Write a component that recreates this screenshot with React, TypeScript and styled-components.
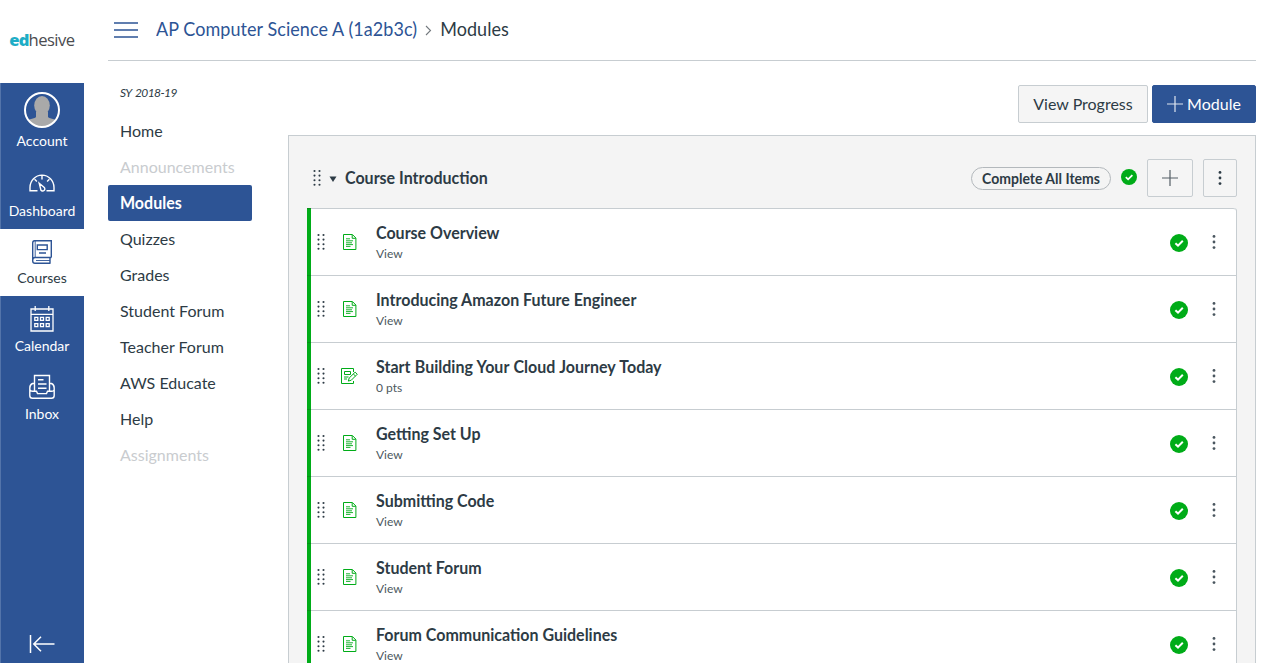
import React from "react";
import styled, { createGlobalStyle } from "styled-components";

const BLUE = "#2d5495";
const INK = "#2d3b45";
const LINE = "#c7cdd1";
const GREEN = "#00ac18";

const Global = createGlobalStyle`
  * { box-sizing: border-box; }
  body { margin: 0; background: #fff; color: ${INK}; font: 16px/24px Lato, "Liberation Sans", sans-serif; overflow: hidden; }
  svg { display: block; flex: none; }
  button { font: inherit; color: inherit; padding: 0; }
  a { color: inherit; text-decoration: none; }
`;

const Page = styled.div`display: flex; height: 663px; overflow: hidden;`;

const Rail = styled.nav`
  width: 84px; flex: none; display: flex; flex-direction: column;
  background: ${BLUE}; box-shadow: inset 1px 0 #5374aa;
`;
const Logo = styled.div`
  height: 83px; background: #fff; color: #4b4c50; display: flex; justify-content: center;
  font: 400 16.6px/80px "Open Sans", sans-serif; letter-spacing: -0.5px;
  b { color: #1fadc6; font-weight: 800; letter-spacing: -0.9px; }
`;
const RailItem = styled.a<{ $h: number; $top: number; $gap: number; $active?: boolean }>`
  height: ${p => p.$h}px; padding-top: ${p => p.$top}px; gap: ${p => p.$gap}px;
  display: flex; flex-direction: column; align-items: center;
  font-size: 14px; line-height: 18px;
  color: ${p => (p.$active ? INK : "#fff")};
  background: ${p => (p.$active ? "#fff" : "transparent")};
  svg { color: ${p => (p.$active ? BLUE : "#fff")}; }
`;
const Collapse = styled.div`
  margin-top: auto; height: 39px; padding: 10px 0 0 29px; color: #fff;
`;

const Shell = styled.div`flex: 1; min-width: 0; padding: 0 23px 0 24px;`;
const Header = styled.header`
  height: 61px; border-bottom: 1px solid ${LINE}; display: flex; align-items: center; padding: 0 0 2px 6px;
  font-size: 18px; letter-spacing: 0.06px;
`;
const Course = styled.a`color: ${BLUE}; margin-left: 18px; transform: scaleY(1.06);`;
const Crumb = styled.span`transform: scaleY(1.06);`;
const Columns = styled.div`display: flex;`;
const Side = styled.nav`width: 180px; flex: none; padding-top: 23px;`;
const Term = styled.div`
  padding-left: 12px; height: 29px; font-size: 12px; line-height: 18px; font-style: italic;
  letter-spacing: -0.6px; word-spacing: 1.5px;
`;
const SideLink = styled.a<{ $active?: boolean; $muted?: boolean }>`
  display: block; width: 144px; height: 36px; padding-left: 12px; line-height: 35px; border-radius: 2px;
  color: ${p => (p.$active ? "#fff" : p.$muted ? "#c9cccf" : INK)};
  background: ${p => (p.$active ? BLUE : "transparent")};
  font-weight: ${p => (p.$active ? 700 : 400)};
`;
const Tall = styled.span`display: inline-block; transform: translateY(-0.6px) scaleY(1.09);`;
const Content = styled.main`flex: 1; padding-top: 24px;`;
const Actions = styled.div`display: flex; justify-content: flex-end; gap: 4px; margin-bottom: 12px;`;
const Button = styled.button<{ $w: number; $primary?: boolean }>`
  width: ${p => p.$w}px; height: 38px; border-radius: 2px; display: flex; align-items: center; justify-content: center;
  gap: 4px;
  border: 1px solid ${p => (p.$primary ? BLUE : LINE)};
  background: ${p => (p.$primary ? BLUE : "#f5f5f5")};
  color: ${p => (p.$primary ? "#fff" : INK)};
`;
const Panel = styled.section`border: 1px solid ${LINE}; background: #f4f4f4; padding: 0 18px; height: 620px;`;
const ModuleHead = styled.div`height: 72px; display: flex; align-items: center; padding: 12px 0 0 6px;`;
const ModuleName = styled.h2`flex: 1; margin: 0 0 0 7px; font-size: 16px; line-height: 24px; font-weight: 700;`;
const Pill = styled.span`
  width: 140px; height: 23px; margin: 1px 10px 0 0; border: 1px solid #b3b8bc; border-radius: 12px;
  font-size: 14px; line-height: 22px; font-weight: 700; text-align: center;
`;
const Status = styled.div`padding-bottom: 2px;`;
const HeadButtons = styled.div`display: flex; gap: 10px; margin-left: 10px;`;
const List = styled.ul`
  list-style: none; margin: 0; padding: 0; border-right: 1px solid ${LINE}; background: #fff;
  border-top-right-radius: 3px;
`;
const Row = styled.li`
  height: 67px; display: flex; align-items: center; padding-left: 6px; border-top: 1px solid ${LINE};
  background: linear-gradient(${GREEN}, ${GREEN}) 0 0 / 4px 100% no-repeat;
  &:first-child { border-top-right-radius: 3px; }
  position: relative;
  &::before { content: ""; position: absolute; left: 0; top: -1px; width: 4px; height: 1px; background: #079018; }
`;
const Grip = styled.div`width: 16px; display: flex; justify-content: center;`;
const TypeIcon = styled.div<{ $shift: number }>`
  width: 18px; margin: 0 ${p => 18 - p.$shift}px 0 ${p => 11 + p.$shift}px; display: flex; justify-content: center;
`;
const Copy = styled.div`flex: 1; padding-bottom: 2px;`;
const Title = styled.div<{ $loose?: boolean }>`
  font-size: 16px; line-height: 24px; font-weight: 700; word-spacing: ${p => (p.$loose ? 0.5 : 0)}px;
`;
const Sub = styled.div`font-size: 12px; line-height: 16px; padding-top: 1px; color: #4c5860;`;
const RowEnd = styled.div`display: flex; align-items: center; gap: 24px; padding-right: 20px;`;
const RowStatus = styled.div`padding-top: 2px;`;

const Dots = ({ cols, color = INK }: { cols: number; color?: string }) => (
  <svg width={cols === 2 ? 8 : 4} height={cols === 2 ? 18 : 16} fill={color}>
    {cols === 2
      ? [0, 1].flatMap(c => [0, 1, 2, 3].map(r => <circle key={`${c}${r}`} cx={1.5 + c * 5} cy={2 + r * 4.6} r="1.05" />))
      : [0, 1, 2].map(r => <circle key={r} cx="2" cy={2.4 + r * 5.6} r="1.4" />)}
  </svg>
);
const Check = ({ size }: { size: number }) => (
  <svg width={size} height={size} viewBox="0 0 18 18">
    <circle cx="9" cy="9" r="9" fill={GREEN} />
    <path d="M5.4 9.2 8 11.6 12.8 6.8" fill="none" stroke="#fff" strokeWidth="2" />
  </svg>
);
const Plus = ({ color }: { color: string }) => (
  <svg width="16" height="16" stroke={color} strokeWidth="1.2"><path d="M8 0V16M0 8H16" /></svg>
);
const PageIcon = () => (
  <svg width="14" height="16" fill="none" stroke={GREEN} strokeWidth="1">
    <path d="M.5.5H9.4L12.9 4V15.5H.5ZM9.2.8V4.3H12.7" />
    <path strokeWidth=".9" d="M3 4.8H7M3 6.8H10M3 8.8H9M3 10.6H10M3 12.4H7.5" />
  </svg>
);
const AssignmentIcon = () => (
  <svg width="17" height="16" fill="none" stroke={GREEN} strokeWidth="1">
    <path d="M12.5 4V.5H.5V15.5H12.5V13M3.5 3.5H9.5V6.5H3.5ZM3 9H7.5M3 11H6M7.3 13.1 8.2 10 14.1 4.2 16.3 6.2 10.3 12.2ZM12.3 6 14.5 8" />
  </svg>
);
const Avatar = () => (
  <svg width="36" height="36" viewBox="0 0 36 36">
    <clipPath id="face"><circle cx="18" cy="18" r="17" /></clipPath>
    <g clipPath="url(#face)" fill="#a9a9a9">
      <path d="M3 36V29C6 26.5 10 27 13 24.5H23C26 27 30 26.5 33 29V36Z" />
      <ellipse cx="18" cy="13.5" rx="7.8" ry="9.5" />
      <path d="M12 20H24V27H12Z" />
    </g>
    <circle cx="18" cy="18" r="17" fill="none" stroke="#fff" strokeWidth="2" />
  </svg>
);
const DashboardIcon = () => (
  <svg width="26" height="26" viewBox="0 0 26 26" fill="none" stroke="currentColor" strokeWidth="1.4">
    <path d="M8.5 20.8H1V17.5A12 12.4 0 0 1 25 17.5V20.8H17.5M13 5.5V9.5M5.6 9.2 7.9 11.4M20.4 9.2 18.1 11.4M10.2 13.2 15.3 17.5A2.1 2.1 0 1 1 12 20.3Z" />
  </svg>
);
const CoursesIcon = () => (
  <svg width="22" height="26" viewBox="0 0 22 26" fill="none" stroke="currentColor" strokeWidth="1.4">
    <path d="M20.3 18.5V1.7H3.5Q1.7 1.7 1.7 4V22Q1.7 24.3 4 24.3H19.5M20.3 18.5H4Q1.7 18.5 1.7 21.3M19 18.5V24.3M6.3 6H16.2V10.6H6.3ZM8 14H15" />
    <path strokeWidth=".9" d="M4.2 2V18M5 21.5H19" />
  </svg>
);
const CalendarIcon = () => (
  <svg width="24" height="26" viewBox="0 0 24 26" fill="none" stroke="currentColor" strokeWidth="1.3">
    <path d="M1 3H23V25H1ZM1 8.4H23M5.2 0V5M18.8 0V5M4.8 11.4H7.8V14.4H4.8ZM10.5 11.4H13.5V14.4H10.5ZM16.2 11.4H19.2V14.4H16.2ZM4.8 17.6H7.8V20.6H4.8ZM10.5 17.6H13.5V20.6H10.5ZM16.2 17.6H19.2V20.6H16.2Z" />
  </svg>
);
const InboxIcon = () => (
  <svg width="26" height="26" viewBox="0 0 26 26" fill="none" stroke="currentColor" strokeWidth="1.4">
    <path d="M5.5 17V1.5H20.5V17M5.5 9.5H3.5Q.8 10.5 .8 14V21.5Q.8 24.3 3.5 24.3H22.5Q25.2 24.3 25.2 21.5V14Q25.2 10.5 22.5 9.5H20.5M.8 15.5Q1.2 17.3 3.5 17.3H7.5L8.5 19.6H17.5L18.5 17.3H22.5Q25 17.3 25.2 15.5M9 5.7H14.5M9 10H17.5M9 14.2H17.5" />
  </svg>
);

const nav = ["Home", "Announcements", "Modules", "Quizzes", "Grades", "Student Forum", "Teacher Forum", "AWS Educate", "Help", "Assignments"];
const items = [
  ["Course Overview", "View"],
  ["Introducing Amazon Future Engineer", "View"],
  ["Start Building Your Cloud Journey Today", "0 pts"],
  ["Getting Set Up", "View"],
  ["Submitting Code", "View"],
  ["Student Forum", "View"],
  ["Forum Communication Guidelines", "View"],
];

export default function App() {
  return (
    <Page>
      <Global />
      <Rail>
        <Logo><b>ed</b>hesive</Logo>
        <RailItem $h={76} $top={9} $gap={4}><Avatar />Account</RailItem>
        <RailItem $h={70} $top={11} $gap={6}><DashboardIcon />Dashboard</RailItem>
        <RailItem $h={67} $top={10} $gap={4} $active><CoursesIcon />Courses</RailItem>
        <RailItem $h={68} $top={10} $gap={5}><CalendarIcon />Calendar</RailItem>
        <RailItem $h={68} $top={10} $gap={5}><InboxIcon />Inbox</RailItem>
        <Collapse>
          <svg width="26" height="20" fill="none" stroke="currentColor" strokeWidth="1.5"><path d="M1.5 1V19M25.5 10H5M12 2.8 4.8 10 12 17.2" /></svg>
        </Collapse>
      </Rail>
      <Shell>
        <Header>
          <svg width="24" height="18" stroke={BLUE} strokeWidth="1.5"><path d="M0 3H24M0 10H24M0 17H24" /></svg>
          <Course>AP Computer Science A (1a2b3c)</Course>
          <svg width="23" height="14" fill="none" stroke="#73797e" strokeWidth="1.1"><path d="M9 4 13.5 8.5 9 13" /></svg>
          <Crumb>Modules</Crumb>
        </Header>
        <Columns>
          <Side>
            <Term>SY 2018-19</Term>
            {nav.map(n => (
              <SideLink key={n} $active={n === "Modules"} $muted={n === "Announcements" || n === "Assignments"}>
                {n === "Modules" ? <Tall>{n}</Tall> : n}
              </SideLink>
            ))}
          </Side>
          <Content>
            <Actions>
              <Button $w={130}>View Progress</Button>
              <Button $w={104} $primary><Plus color="#e0e6f0" />Module</Button>
            </Actions>
            <Panel>
              <ModuleHead>
                <Dots cols={2} />
                <svg width="17" height="8"><path d="M8.5 2.5H15.5L12 8Z" fill={INK} /></svg>
                <ModuleName><Tall>Course Introduction</Tall></ModuleName>
                <Pill><Tall>Complete All Items</Tall></Pill>
                <Status><Check size={16} /></Status>
                <HeadButtons>
                  <Button $w={46}><Plus color="#555f67" /></Button>
                  <Button $w={34}><Dots cols={1} /></Button>
                </HeadButtons>
              </ModuleHead>
              <List>
                {items.map(([title, sub]) => (
                  <Row key={title}>
                    <Grip><Dots cols={2} /></Grip>
                    <TypeIcon $shift={sub === "View" ? 1 : 0}>{sub === "View" ? <PageIcon /> : <AssignmentIcon />}</TypeIcon>
                    <Copy><Title $loose={sub !== "View"}><Tall>{title}</Tall></Title><Sub>{sub}</Sub></Copy>
                    <RowEnd><RowStatus><Check size={18} /></RowStatus><Dots cols={1} color="#4a565f" /></RowEnd>
                  </Row>
                ))}
              </List>
            </Panel>
          </Content>
        </Columns>
      </Shell>
    </Page>
  );
}
